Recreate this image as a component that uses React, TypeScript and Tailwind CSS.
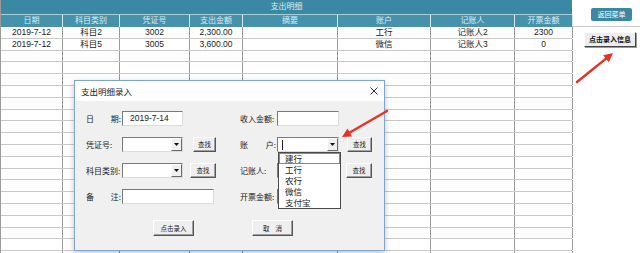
import React from 'react';

const COLS = ['62px', '57px', '70px', '53px', '95px', '93px', '84px', '58px'];
const HEADERS = ['日期', '科目类别', '凭证号', '支出金额', '摘要', '账户', '记账人', '开票金额'];
const ROWS: string[][] = [
  ['2019-7-12', '科目2', '3002', '2,300.00', '', '工行', '记账人2', '2300'],
  ['2019-7-12', '科目5', '3005', '3,600.00', '', '微信', '记账人3', '0'],
];
const EMPTY_ROWS = 18;

const sheetFont = { fontFamily: '"Liberation Sans", "Noto Sans CJK SC", sans-serif' };
const formFont = { fontFamily: '"Noto Sans CJK SC", "Liberation Sans", sans-serif' };

function Grid({ children, className }: { children: React.ReactNode; className?: string }) {
  return (
    <div className={`grid ${className ?? ''}`} style={{ gridTemplateColumns: COLS.join(' ') }}>
      {children}
    </div>
  );
}

function Sheet() {
  const blank = Array.from({ length: EMPTY_ROWS }, () => Array(8).fill(''));
  return (
    <div className="w-[572px] border-l border-[#9a9a9a]" style={sheetFont}>
      <div className="h-[15px] bg-[#3a88a2] border-b border-[#a9cfdc] flex items-center justify-center text-[8px] text-[#dcecf2]">
        支出明细
      </div>
      <Grid className="h-[12px] bg-[#4692ab]">
        {HEADERS.map((h) => (
          <div key={h} className="border-r border-[#d7e8ee] flex items-center justify-center text-[8px] text-[#dcecf2]">
            {h}
          </div>
        ))}
      </Grid>
      {[...ROWS, ...blank].map((row, r) => (
        <Grid key={r} className="h-[11.8px] border-b border-[#c9c9c9]">
          {row.map((cell, c) => (
            <div key={c} className="border-r border-[#9a9a9a] flex items-center justify-center text-[8.5px] leading-none text-[#1a1a1a]">
              {cell}
            </div>
          ))}
        </Grid>
      ))}
    </div>
  );
}

function Label({ parts, w = 'w-[36px]' }: { parts: string[]; w?: string }) {
  return (
    <div className={`${w} h-[15px] flex justify-between items-center whitespace-nowrap text-[8px] leading-none text-[#1a1a1a] pr-[1px]`}>
      {parts.map((p) => (
        <span key={p}>{p}</span>
      ))}
    </div>
  );
}

function TextBox({ value, w }: { value?: string; w: string }) {
  return (
    <div className={`${w} h-[15px] shrink-0 bg-white border border-t-[#7a7a7a] border-l-[#7a7a7a] border-r-[#dcdcdc] border-b-[#dcdcdc] flex items-center pl-[7px] text-[8.5px] leading-none text-[#1a1a1a]`} style={sheetFont}>
      {value}
    </div>
  );
}

function Combo({ w, caret }: { w: string; caret?: boolean }) {
  return (
    <div className={`${w} h-[15px] shrink-0 bg-white border border-t-[#7a7a7a] border-l-[#7a7a7a] border-r-[#dcdcdc] border-b-[#dcdcdc] flex items-center justify-between`}>
      <div className="pl-[4px] flex items-center">
        {caret && <div className="w-[1px] h-[10px] bg-[#222]" />}
      </div>
      <div className="w-[11px] h-[13px] bg-[#f0f0f0] border border-t-white border-l-white border-r-[#6a6a6a] border-b-[#6a6a6a] flex items-center justify-center">
        <svg width="5" height="3" viewBox="0 0 5 3">
          <path d="M0 0h5L2.5 3z" fill="#111" />
        </svg>
      </div>
    </div>
  );
}

function WinButton({ children, w, h = 'h-[15px]' }: { children: React.ReactNode; w: string; h?: string }) {
  return (
    <div className={`${w} ${h} shrink-0 bg-[#efefef] border border-t-white border-l-white border-r-[#555] border-b-[#555] shadow-[inset_-1px_-1px_0_#a0a0a0] flex items-center justify-center whitespace-nowrap text-[6.5px] leading-none text-[#222]`}>
      {children}
    </div>
  );
}

function Dialog() {
  return (
    <div className="absolute left-[74px] top-[80px] w-[311px] h-[171px] border border-[#7ea6cf] bg-[#f0f0f0] shadow-[0_2px_6px_rgba(0,0,0,0.25)]" style={formFont}>
      <div className="h-[20px] bg-white flex items-center justify-between pl-[6px] pr-[6px] text-[8.5px] leading-none text-[#1a1a1a]">
        <span>支出明细录入</span>
        <svg width="8" height="8" viewBox="0 0 8 8">
          <path d="M0.5 0.5l7 7M7.5 0.5l-7 7" stroke="#333" strokeWidth="1" />
        </svg>
      </div>

      <div className="grid grid-cols-[154px_auto] pl-[11px] pt-[10px]">
        <div className="flex flex-col gap-[11px]">
          <div className="flex items-center">
            <Label parts={['日', '期:']} />
            <TextBox value="2019-7-14" w="w-[61px]" />
          </div>
          <div className="flex items-center">
            <Label parts={['凭证号:']} />
            <Combo w="w-[61px]" />
            <div className="ml-[10px]">
              <WinButton w="w-[23px]">查找</WinButton>
            </div>
          </div>
          <div className="flex items-center">
            <Label parts={['科目类别:']} />
            <Combo w="w-[61px]" />
            <div className="ml-[7px]">
              <WinButton w="w-[26px]">查找</WinButton>
            </div>
          </div>
          <div className="flex items-center">
            <Label parts={['备', '注:']} />
            <TextBox w="w-[92px]" />
          </div>
        </div>

        <div className="flex flex-col gap-[11px]">
          <div className="flex items-center">
            <Label parts={['收入金额:']} w="w-[37px]" />
            <TextBox w="w-[62px]" />
          </div>
          <div className="flex items-center">
            <Label parts={['账', '户:']} w="w-[37px]" />
            <Combo w="w-[62px]" caret />
            <div className="ml-[8px]">
              <WinButton w="w-[25px]">查找</WinButton>
            </div>
          </div>
          <div className="flex items-center">
            <Label parts={['记账人:']} w="w-[37px]" />
            <Combo w="w-[62px]" />
            <div className="ml-[7px]">
              <WinButton w="w-[26px]">查找</WinButton>
            </div>
          </div>
          <div className="flex items-center">
            <Label parts={['开票金额:']} w="w-[37px]" />
            <TextBox w="w-[62px]" />
          </div>
        </div>
      </div>

      <div className="flex pl-[78px] gap-[58px] mt-[16px]">
        <WinButton w="w-[41px]" h="h-[16px]">点击录入</WinButton>
        <WinButton w="w-[41px]" h="h-[16px]">
          <span className="tracking-[6px] pl-[6px]">取消</span>
        </WinButton>
      </div>

      {/* open list of the 账户 combo */}
      <div className="absolute left-[203px] top-[71px] w-[63px] h-[57px] bg-white border border-[#4a4a4a] text-[8.5px] text-[#1a1a1a] leading-none">
        {['建行', '工行', '农行', '微信', '支付宝'].map((item, i) => (
          <div key={item} className={`h-[11px] flex items-center pl-[6px] ${i === 0 ? 'outline outline-1 outline-[#888] -outline-offset-1' : ''}`}>
            {item}
          </div>
        ))}
      </div>
    </div>
  );
}

function Arrow({ x1, y1, x2, y2 }: { x1: number; y1: number; x2: number; y2: number }) {
  const a = Math.atan2(y2 - y1, x2 - x1);
  const len = 9;
  const wid = 4.5;
  const bx = x2 - len * Math.cos(a);
  const by = y2 - len * Math.sin(a);
  const px = -Math.sin(a) * wid;
  const py = Math.cos(a) * wid;
  return (
    <g>
      <line x1={x1} y1={y1} x2={bx} y2={by} stroke="#e6332a" strokeWidth="2.5" strokeLinecap="round" />
      <path d={`M${x2} ${y2}L${bx + px} ${by + py}L${bx - px} ${by - py}Z`} fill="#e6332a" />
    </g>
  );
}

export default function App() {
  return (
    <div className="relative w-[640px] h-[253px] overflow-hidden bg-white flex">
      <Sheet />

      <div className="flex-1 flex flex-col" style={sheetFont}>
        <div className="h-[27px] border-b border-[#c9c9c9] flex items-start pl-[19px] pt-[8px]">
          <div className="w-[41px] h-[13px] rounded-[2px] bg-[#3a88a2] flex items-center justify-center text-[7px] leading-none text-white" style={formFont}>
            返回菜单
          </div>
        </div>
        <div className="pl-[12px] pt-[5px]">
          <div className="w-[52px] h-[15px] bg-[#ededed] border border-t-white border-l-white border-r-[#444] border-b-[#444] shadow-[1px_1px_0_#9a9a9a] flex items-center justify-center text-[7px] leading-none font-bold text-[#111]" style={formFont}>
            点击录入信息
          </div>
        </div>
      </div>

      <Dialog />

      <svg className="absolute left-0 top-0 pointer-events-none" width="640" height="253">
        <Arrow x1={387} y1={111} x2={342} y2={137} />
        <Arrow x1={577} y1={82} x2={613} y2={53} />
      </svg>
    </div>
  );
}
